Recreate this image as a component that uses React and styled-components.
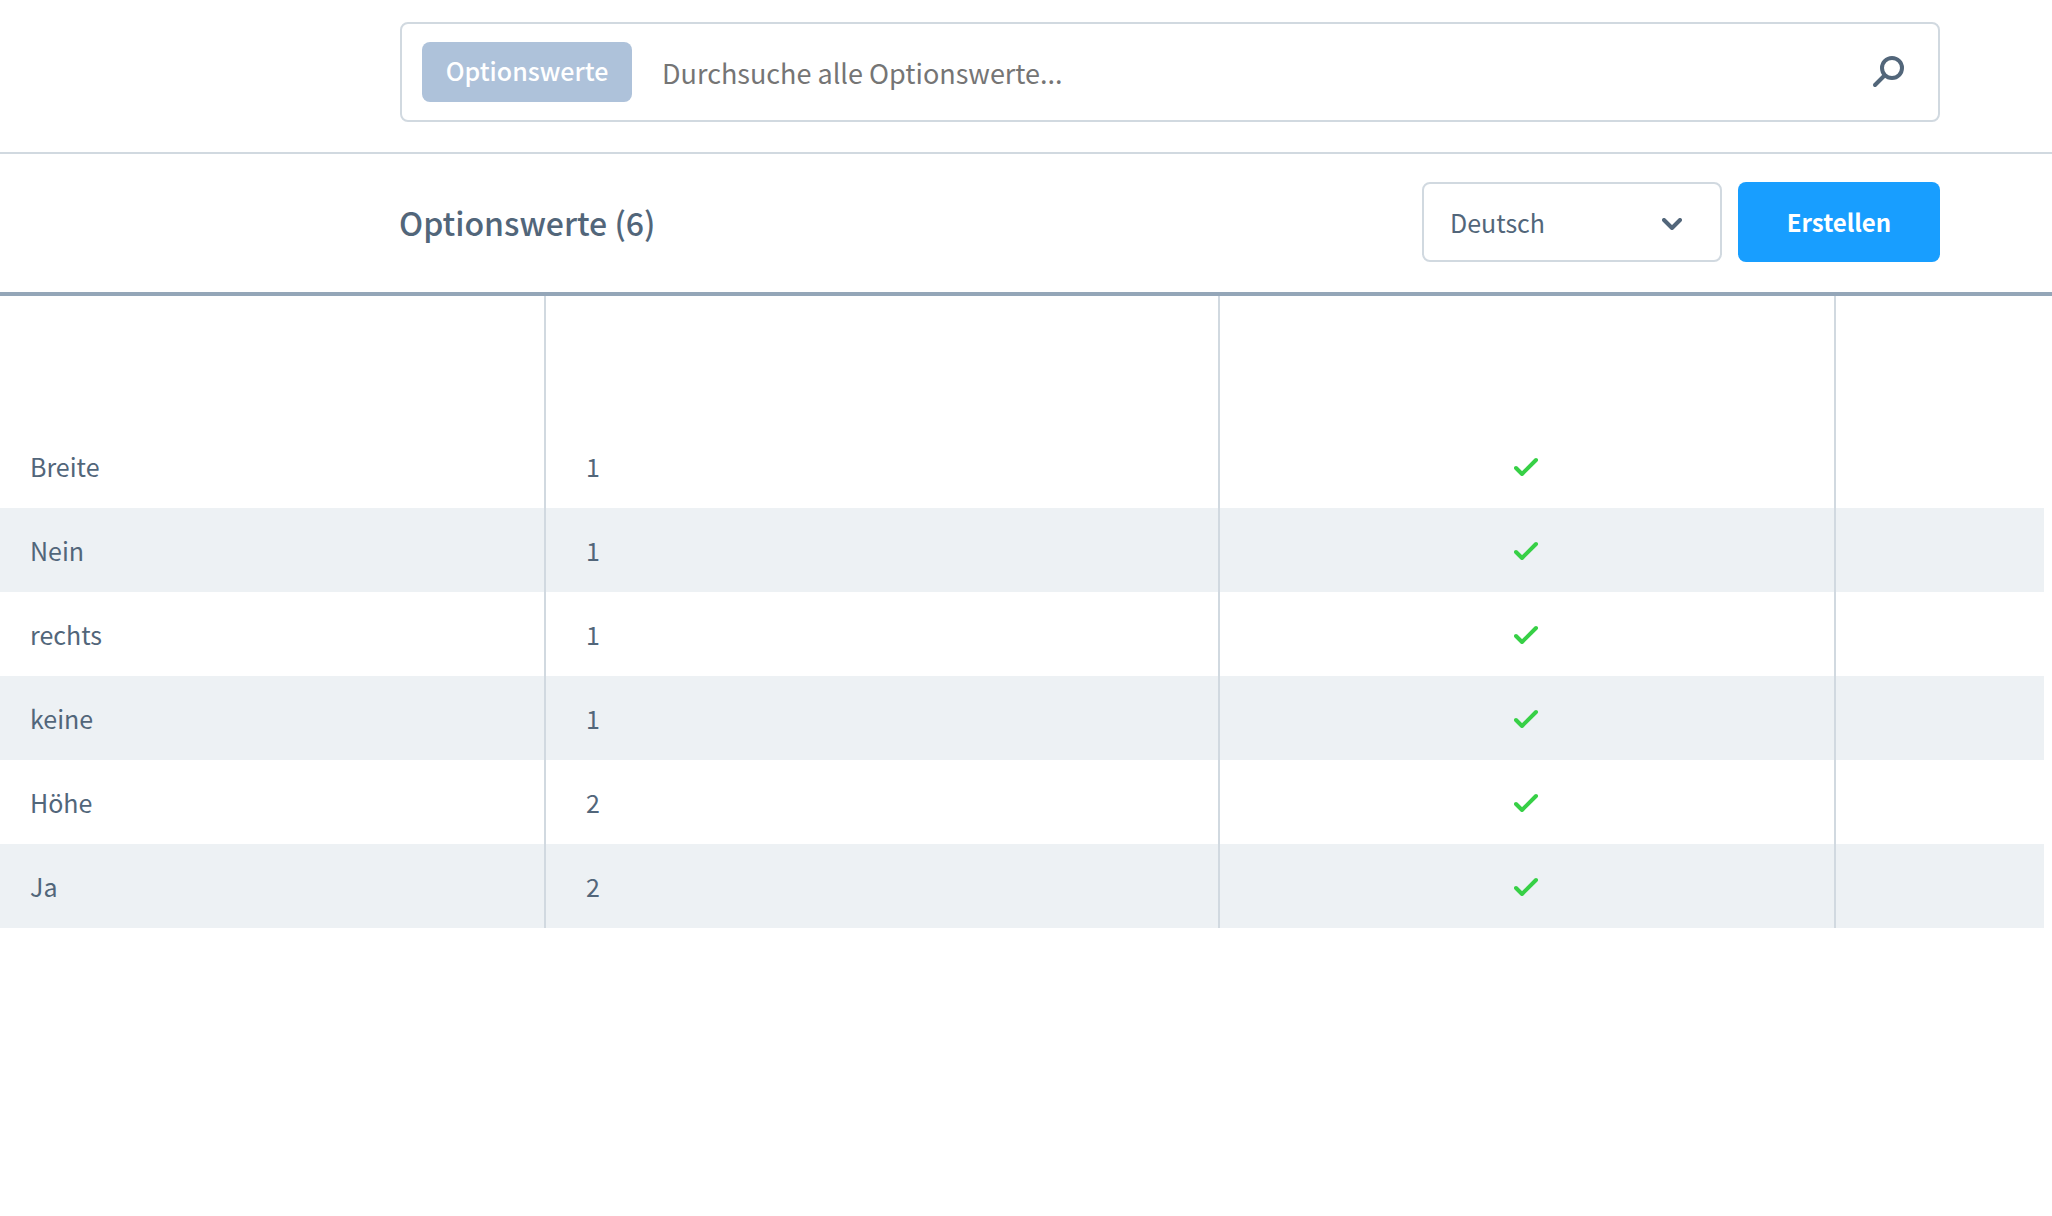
import React, { useState } from 'react'
// Styling
import styled, { createGlobalStyle } from 'styled-components'

// Data
const values = [
	{ name: 'Breite', position: 1, active: true },
	{ name: 'Nein', position: 1, active: true },
	{ name: 'rechts', position: 1, active: true },
	{ name: 'keine', position: 1, active: true },
	{ name: 'Höhe', position: 2, active: true },
	{ name: 'Ja', position: 2, active: true },
]

const App = () => {
	const [search, setSearch] = useState('')

	return (
		<>
			<GlobalStyle />
			<Header>
				<SearchBar role='search'>
					<SearchType type='button'>Optionswerte</SearchType>
					<SearchInput
						type='search'
						aria-label='Suche'
						placeholder='Durchsuche alle Optionswerte...'
						value={search}
						onChange={e => setSearch(e.target.value)}
					/>
					<SearchButton type='button' aria-label='Suchen'>
						<svg width='32' height='32' viewBox='0 0 32 32' fill='none' stroke='currentColor' strokeWidth='4' strokeLinecap='round'>
							<circle cx='20' cy='12' r='10' />
							<path d='M12.5 19.5 L3 29' />
						</svg>
					</SearchButton>
				</SearchBar>
			</Header>
			<main>
				<Toolbar>
					<h2>Optionswerte (6)</h2>
					<Actions>
						<Language>
							<select aria-label='Sprache' defaultValue='de'>
								<option value='de'>Deutsch</option>
								<option value='en'>English</option>
							</select>
							<svg width='20' height='12' viewBox='0 0 20 12' fill='none' stroke='currentColor' strokeWidth='4' strokeLinecap='round' strokeLinejoin='round'>
								<path d='M2 2 L10 10 L18 2' />
							</svg>
						</Language>
						<CreateButton type='button'>Erstellen</CreateButton>
					</Actions>
				</Toolbar>
				<Grid>
					<colgroup>
						<col width='546' />
						<col width='674' />
						<col width='616' />
						<col width='208' />
					</colgroup>
					<thead>
						<tr>
							<th aria-label='Name' />
							<th aria-label='Position' />
							<th aria-label='Aktiv' />
							<th aria-label='Aktionen' />
						</tr>
					</thead>
					<tbody>
						{ values.map(value => (
							<tr key={value.name}>
								<NameCell>{ value.name }</NameCell>
								<td>{ value.position }</td>
								<CheckCell>{ value.active && <Check /> }</CheckCell>
								<td />
							</tr>
						)) }
					</tbody>
				</Grid>
			</main>
		</>
	)
}

const Check = () => (
	<svg width='26' height='20' viewBox='0 0 26 20' fill='none' stroke='#37d046' strokeWidth='4' strokeLinecap='round' strokeLinejoin='round' role='img' aria-label='aktiv'>
		<path d='M2 12 L8 18 L22 4' />
	</svg>
)

const GlobalStyle = createGlobalStyle`
	* {
		box-sizing: border-box;
	}

	body {
		margin: 0;
		background: #fff;
		color: #52667a;
	}

	body, button, input, select {
		font-family: 'Source Sans Pro', 'Noto Sans CJK SC', sans-serif;
		font-size: 25px;
		line-height: 36px;
	}
`

const Header = styled.header`
	padding: 22px 112px 30px 400px;
	border-bottom: 2px solid #d1d9e0;
`

const SearchBar = styled.form`
	display: flex;
	align-items: center;
	height: 100px;
	padding: 0 34px 0 20px;
	border: 2px solid #d1d9e0;
	border-radius: 8px;
`

const SearchType = styled.button`
	flex: none;
	width: 210px;
	height: 60px;
	padding: 0 0 4px;
	border: none;
	border-radius: 8px;
	background: #aec2da;
	color: #fff;
	font-weight: 500;
`

const SearchInput = styled.input`
	flex: 1;
	min-width: 0;
	padding: 2px 30px 0;
	border: none;
	outline: none;
	background: none;
	color: inherit;
	appearance: none;
	font-size: 27px;

	&::placeholder {
		color: #757575;
	}
`

const SearchButton = styled.button`
	display: flex;
	padding: 0;
	border: none;
	background: none;
	color: #52667a;
`

const Toolbar = styled.div`
	display: flex;
	align-items: center;
	justify-content: space-between;
	padding: 28px 112px 30px 399px;
	border-bottom: 4px solid #94a6b8;

	h2 {
		margin: 0;
		font-size: 32px;
		line-height: 44px;
		font-weight: 500;
	}
`

const Actions = styled.div`
	display: flex;
	gap: 16px;
`

const Language = styled.div`
	position: relative;

	select {
		width: 300px;
		height: 80px;
		padding: 0 26px;
		border: 2px solid #d1d9e0;
		border-radius: 8px;
		background: #fff;
		color: inherit;
		appearance: none;
	}

	svg {
		position: absolute;
		top: 36px;
		right: 40px;
		pointer-events: none;
	}
`

const CreateButton = styled.button`
	width: 202px;
	height: 80px;
	padding: 0;
	border: none;
	border-radius: 8px;
	background: #189eff;
	color: #fff;
	font-size: 24px;
	font-weight: 700;
`

const Grid = styled.table`
	width: calc(100% - 8px);
	table-layout: fixed;
	border-collapse: separate;
	border-spacing: 0;

	th {
		height: 128px;
		padding: 0;
	}

	td {
		height: 84px;
		padding: 0 40px;
	}

	th:not(:last-child), td:not(:last-child) {
		border-right: 2px solid #d1d9e0;
	}

	tbody tr:nth-child(even) {
		background: #edf1f4;
	}
`

const NameCell = styled.td`
	&& {
		padding-left: 30px;
	}
`

const CheckCell = styled.td`
	svg {
		display: block;
		margin: 0 auto;
	}
`

export default App
